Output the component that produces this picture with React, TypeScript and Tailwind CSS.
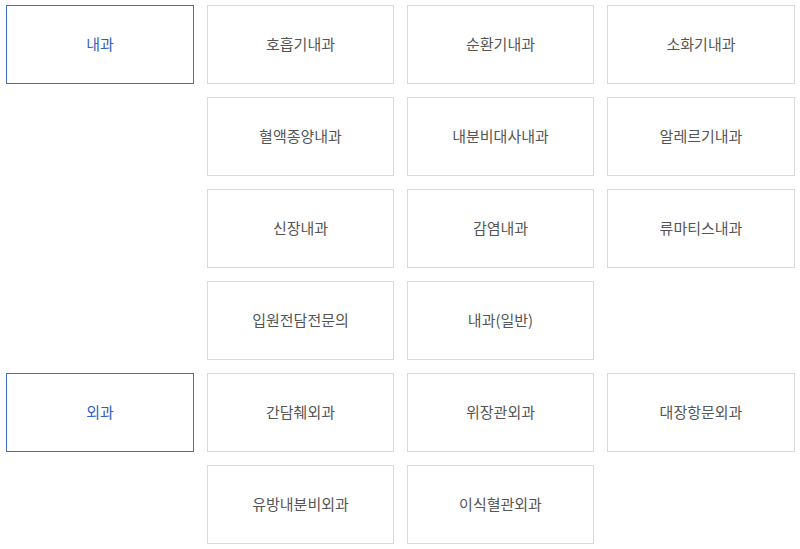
import React from "react";

const sections = [
  {
    title: "내과",
    items: [
      "호흡기내과",
      "순환기내과",
      "소화기내과",
      "혈액종양내과",
      "내분비대사내과",
      "알레르기내과",
      "신장내과",
      "감염내과",
      "류마티스내과",
      "입원전담전문의",
      "내과(일반)",
    ],
  },
  {
    title: "외과",
    items: ["간담췌외과", "위장관외과", "대장항문외과", "유방내분비외과", "이식혈관외과"],
  },
];

export default function App() {
  return (
    <div
      className="w-[800px] h-[549px] bg-white pt-[5px] pl-[6px]"
      style={{ fontFamily: '"Noto Sans CJK KR", "Noto Sans", sans-serif' }}
    >
      <div className="flex flex-col gap-[13px]">
        {sections.map((s) => (
          <div key={s.title} className="flex gap-[13px]">
            {/* department */}
            <div className="w-[188px] h-[79px] shrink-0 border border-[#3b6fc9] flex items-center justify-center text-[15px] text-[#2f5fc0]">
              {s.title}
            </div>
            <div className="grid grid-cols-[187px_187px_188px] gap-x-[13px] gap-y-[13px] content-start">
              {s.items.map((it) => (
                <div
                  key={it}
                  className="h-[79px] border border-[#dadada] flex items-center justify-center text-[15px] text-[#555555]"
                >
                  {it}
                </div>
              ))}
            </div>
          </div>
        ))}
      </div>
    </div>
  );
}
